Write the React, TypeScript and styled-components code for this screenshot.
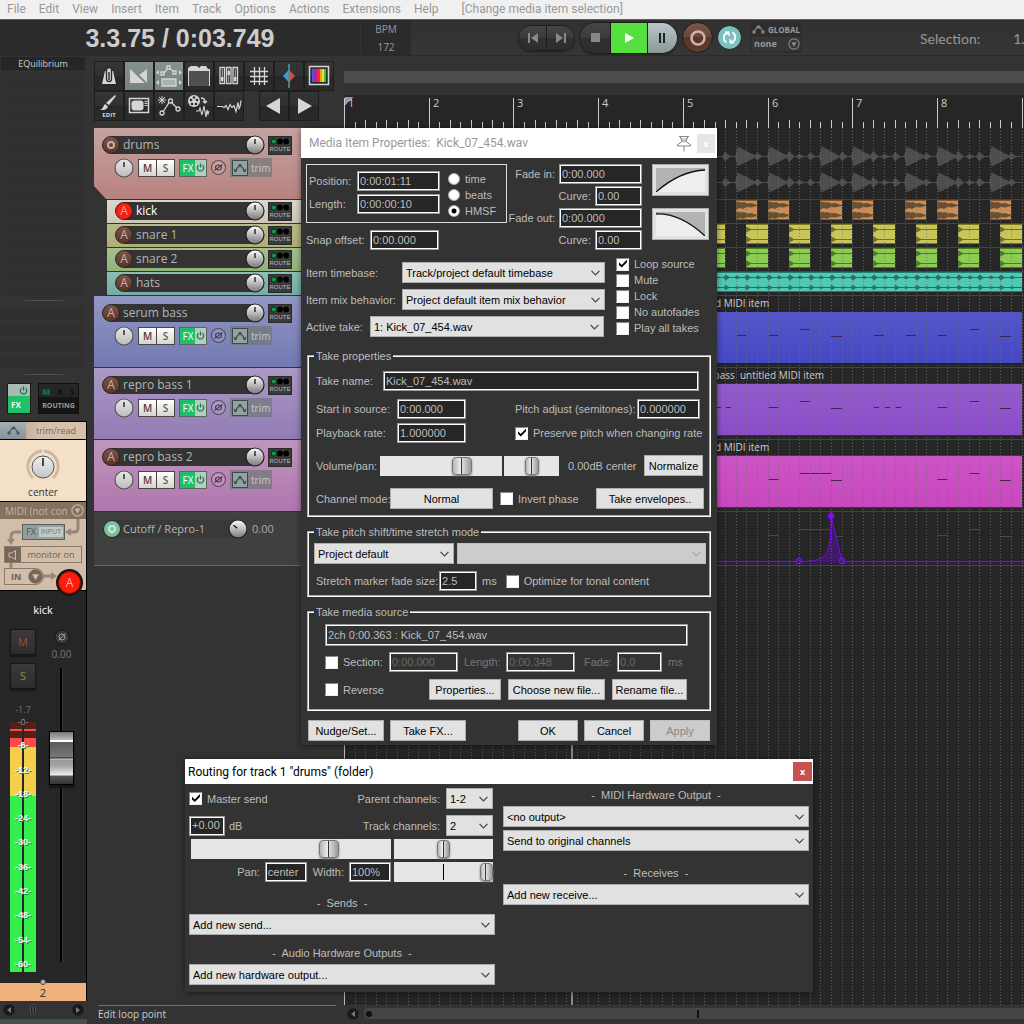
import React from 'react';
import styled, { createGlobalStyle, css } from 'styled-components';

const sans = '"Liberation Sans", Arial, sans-serif';
const human = '"Open Sans", "Noto Sans", sans-serif';

const GlobalStyle = createGlobalStyle`
  *, *::before, *::after { box-sizing: border-box; }
  html, body { margin: 0; padding: 0; background: #333; }
  body { overflow: hidden; font-family: ${human}; font-size: 11px; color: #bbb; }
  button, input, select { font: inherit; color: inherit; margin: 0; padding: 0; border: 0; border-radius: 0; outline: none; }
  svg { display: block; }
`;

const Page = styled.div`
  position: relative;
  display: flex;
  flex-direction: column;
  min-height: 100vh;
  background: #333;
`;

/* ---------- Menu ---------- */

const MenuBar = styled.nav`
  display: flex;
  align-items: center;
  gap: 13px;
  height: 20px;
  padding: 0 7px 2px;
  background: #f0f0f0;
  border-bottom: 1px solid #5a625e;
`;

const MenuLink = styled.a<{ $apart?: boolean }>`
  color: #999;
  font: 12px/16px Roboto, sans-serif;
  text-decoration: none;
  white-space: nowrap;
  margin-left: ${p => (p.$apart ? '10px' : '0')};
`;

/* ---------- Transport ---------- */

const Transport = styled.header`
  display: flex;
  align-items: center;
  height: 36px;
  background: linear-gradient(#303030, #363636);
  border-bottom: 1px solid #2a2a2a;
  overflow: hidden;
`;

const Clock = styled.div`
  flex: none;
  width: 361px;
  height: 36px;
  line-height: 36px;
  background: #2b2b2b;
  border-right: 1px solid #333;
  color: #ccc;
  font: bold 25px/36px ${sans};
  text-align: center;
`;

const Tempo = styled.div`
  flex: none;
  width: 50px;
  height: 36px;
  display: flex;
  flex-direction: column;
  align-items: center;
  background: #2b2b2b;
  color: #999;
  font-size: 10px;
  line-height: 18px;
`;

const Pill = styled.div<{ $big?: boolean; $gap: number }>`
  flex: none;
  display: flex;
  margin-left: ${p => p.$gap}px;
  height: ${p => (p.$big ? 32 : 26)}px;
  border: 1px solid #1c1c1c;
  border-radius: 16px;
  overflow: hidden;
  box-shadow: 0 2px 1px #2a2a2a;
`;

const PillButton = styled.button<{ $tone?: 'play' | 'pause'; $w: number }>`
  display: flex;
  align-items: center;
  justify-content: center;
  width: ${p => p.$w}px;
  height: 100%;
  background: linear-gradient(#454545, #3a3a3a 50%, #303030 50%, #2d2d2d);
  color: #888;
  & + & { border-left: 1px solid #1c1c1c; }
  ${p => p.$tone === 'play' && css`background: #55e040; color: #fff;`}
  ${p => p.$tone === 'pause' && css`background: linear-gradient(#bac6c8, #8b9898); color: #222;`}
`;

const RoundButton = styled.button<{ $size: number; $kind: 'rec' | 'loop'; $gap: number }>`
  flex: none;
  display: flex;
  align-items: center;
  justify-content: center;
  margin-left: ${p => p.$gap}px;
  width: ${p => p.$size}px;
  height: ${p => p.$size}px;
  border: 1px solid #1e1e1e;
  border-radius: 50%;
  background: ${p => (p.$kind === 'rec' ? 'linear-gradient(#7a5548, #6c4638 50%, #5c3426 50%, #613a2c)' : '#7cc0c0')};
`;

const GlobalBox = styled.div`
  flex: none;
  margin-left: 8px;
  width: 52px;
  height: 31px;
  padding: 1px 2px;
  background: #2e2e2e;
  color: #999;
  font: bold 8px/14px ${human};
  > div { display: flex; align-items: center; justify-content: space-between; }
  > div + div { background: #363636; padding-left: 2px; font-size: 9px; }
`;

const Selection = styled.div`
  flex: 1;
  display: flex;
  gap: 33px;
  padding-left: 118px;
  padding-top: 3px;
  color: #999;
  font: 14px/18px Lato, sans-serif;
  white-space: nowrap;
  overflow: hidden;
`;

/* ---------- Main ---------- */

const Main = styled.main`
  flex: 1;
  display: flex;
  min-height: 0;
`;

/* ---------- Mixer strip ---------- */

const Mixer = styled.aside`
  flex: none;
  display: flex;
  flex-direction: column;
  width: 87px;
  padding-top: 1px;
`;

const Slots = styled.div`
  display: flex;
  flex-direction: column;
  gap: 2px;
  padding: 0 2px 0 1px;
`;

const Slot = styled.div<{ $on?: boolean }>`
  height: 14px;
  background: ${p => (p.$on ? '#262626' : '#303030')};
  border-bottom: 1px solid #2d2d2d;
  color: #ccc;
  font: 9px/14px ${human};
  text-align: center;
`;

const Rule = styled.div<{ $my: number }>`
  width: 38px;
  height: 1px;
  margin: ${p => p.$my}px auto;
  background: #505050;
`;

const FxRow = styled.div`
  display: flex;
  gap: 7px;
  padding: 2px 7px 7px;
  height: 40px;
`;

const MixFx = styled.button`
  display: flex;
  flex-direction: column;
  width: 24px;
  height: 31px;
  border: 1px solid #1a1a1a;
  background: #20c068;
  color: #eafff0;
  font: bold 8px/17px ${human};
  text-align: left;
  > span:first-child { display: flex; justify-content: flex-end; align-items: center; height: 13px; width: 100%; padding-right: 2px; background: #a9b9b1; }
  > span:last-child { padding-left: 3px; }
`;

const MixRoute = styled.button`
  width: 41px;
  height: 31px;
  border: 1px solid #111;
  background: linear-gradient(#262626 13px, #151515 13px);
  color: #999;
  font: bold 7px/15px ${human};
  text-align: center;
  > div { display: flex; justify-content: space-around; height: 13px; line-height: 13px; color: #111; font-size: 8px; }
  b { color: #0a7a3a; }
`;

const Strip = styled.section`
  position: relative;
  border-top: 1px solid #000;
  border-right: 1px solid #000;
  background: #d2bda8;
  color: #77675a;
`;

const TrimRow = styled.div`
  display: flex;
  height: 18px;
  border-bottom: 1px solid #000;
  line-height: 17px;
  font-size: 9px;
  > span:first-child { width: 26px; background: linear-gradient(#a3afb3, #869399); display: flex; align-items: center; justify-content: center; }
  > span:last-child { flex: 1; text-align: center; background: linear-gradient(90deg, #c4b09c, #d4c0ab 25%); }
`;

const PanBox = styled.div`
  display: flex;
  flex-direction: column;
  align-items: center;
  height: 62px;
  padding-top: 7px;
  background: #f4dfc7;
  border-bottom: 1px solid #000;
  font: 10px/14px ${human};
  color: #333;
`;

const MidiBar = styled.button`
  display: flex;
  align-items: center;
  justify-content: space-between;
  width: 100%;
  height: 17px;
  padding: 0 2px 0 5px;
  background: #84725f;
  color: #c3b3a3;
  font: 10px/16px ${human};
`;

const IoBox = styled.div`
  position: relative;
  display: flex;
  flex-direction: column;
  align-items: flex-start;
  height: 71px;
  padding: 5px 4px 0;
  > svg { position: absolute; left: 0; top: 0; }
`;

const InputFx = styled.button`
  position: relative;
  display: flex;
  align-items: center;
  gap: 3px;
  width: 43px;
  height: 16px;
  margin-left: 18px;
  padding-left: 3px;
  border: 1px solid #55605f;
  background: #93a09f;
  color: #4e5a59;
  font: 9px/14px ${human};
  > span { width: 24px; background: #bfc9c6; color: #6a7674; font-size: 7px; line-height: 10px; text-align: center; }
`;

const MonitorBtn = styled.button`
  position: relative;
  display: flex;
  align-items: center;
  width: 78px;
  height: 17px;
  margin-top: 6px;
  border: 1px solid #8a7868;
  background: #d2bda8;
  color: #6f6052;
  font: 9px/15px ${human};
  > span:first-child { display: flex; align-items: center; justify-content: center; width: 16px; height: 15px; background: #77675a; }
  > span:last-child { flex: 1; text-align: center; }
`;

const InBtn = styled.button`
  position: relative;
  display: flex;
  align-items: center;
  justify-content: space-between;
  width: 40px;
  height: 17px;
  margin-top: 5px;
  padding-left: 6px;
  border: 1px solid #8a7868;
  border-radius: 0 9px 9px 0;
  background: #d2bda8;
  color: #6f6052;
  font: bold 9px/15px ${human};
`;

const ArmBig = styled.button`
  position: absolute;
  right: 5px;
  bottom: -4px;
  width: 23px;
  height: 23px;
  border: 1px solid #7a1008;
  border-radius: 50%;
  background: #ff1c0c;
  color: #ffb0a8;
  font: 12px/20px ${human};
  box-shadow: 0 0 0 2px #1c1414;
`;

const FaderZone = styled.section`
  flex: 1;
  display: flex;
  flex-direction: column;
  background: #262626;
  border-top: 1px solid #000;
  border-right: 1px solid #000;
`;

const StripName = styled.h2`
  margin: 10px 0 11px;
  height: 17px;
  font: 11px/17px ${human};
  text-align: center;
  color: #fff;
`;

const StripCols = styled.div`
  flex: 1;
  display: flex;
  padding-left: 10px;
  gap: 9px;
`;

const ColLeft = styled.div`
  display: flex;
  flex-direction: column;
  width: 26px;
`;

const ColRight = styled.div`
  display: flex;
  flex-direction: column;
  align-items: center;
  width: 33px;
`;

const SquareBtn = styled.button<{ $c: string }>`
  flex: none;
  width: 26px;
  height: 26px;
  margin-bottom: 8px;
  border: 1px solid #151515;
  background: linear-gradient(#3a3a3a, #2d2d2d);
  box-shadow: 0 2px 1px #1a1a1a;
  color: ${p => p.$c};
  font: 11px/24px ${human};
`;

const PeakText = styled.div`
  height: 12px;
  margin: 7px 0 6px;
  color: #777;
  font: 9px/12px ${human};
  text-align: center;
`;

const GainText = styled.div`
  height: 12px;
  margin: 3px 0 8px;
  color: #777;
  font: 10px/12px ${human};
`;

const Meter = styled.div`
  position: relative;
  display: flex;
  flex-direction: column;
  justify-content: space-between;
  height: 250px;
  padding-bottom: 2px;
  background: linear-gradient(
    #52211c 7px, #ff4a4a 7px, #ff4a4a 9px, #52211c 9px, #52211c 16px,
    #ff4a4a 16px, #ff4a4a 25px, #f5ce4b 25px, #f5ce4b 74px, #35f04c 74px);
  &::before { content: ''; position: absolute; left: 12px; top: 0; width: 2px; height: 100%; background: #262626; }
  > span { position: relative; height: 12px; font: bold 9px/12px ${sans}; color: #fff; text-align: center; text-shadow: 1px 1px 0 #1a8a50; }
  > span:first-child { height: 0; margin-bottom: 5px; line-height: 0; color: #888; text-shadow: none; font-weight: normal; }
`;

const FaderTrack = styled.div`
  position: relative;
  width: 3px;
  height: 294px;
  background: #000;
  border-right: 1px solid #3a3a3a;
`;

const FaderCap = styled.div`
  position: absolute;
  left: -11px;
  top: 63px;
  width: 25px;
  height: 54px;
  border: 1px solid #000;
  box-shadow: 0 3px 2px #151515;
  background: linear-gradient(#777, #bbb 8px, #fff 8px, #fff 10px, #5a5a5a 10px, #777 25px, #222 26px, #ddd 27px, #999 28px, #a5a5a5 34px, #eee 43px, #555 44px, #333);
`;

const IndexBar = styled.div`
  position: relative;
  height: 18px;
  background: #efb27c;
  color: #2a2a2a;
  font: 11px/19px ${human};
  text-align: center;
  &::before { content: ''; position: absolute; left: 40px; top: -4px; width: 6px; height: 6px; border-radius: 50%; background: #bbb; border: 1px solid #444; }
`;

const MixScroll = styled.div`
  display: flex;
  align-items: center;
  justify-content: space-between;
  height: 23px;
  padding: 0 3px 1px;
  background: #333;
  border-bottom: 5px solid #475050;
`;

/* ---------- Track panel ---------- */

const TrackPanel = styled.section`
  flex: none;
  display: flex;
  flex-direction: column;
  width: 257px;
  padding: 5px 7px 0;
`;

const Toolbar = styled.div`
  display: flex;
`;

const ToolButton = styled.button<{ $active?: boolean; $gap?: boolean }>`
  display: flex;
  align-items: center;
  justify-content: center;
  width: 30px;
  height: 30px;
  margin-left: ${p => (p.$gap ? '15px' : '0')};
  border: 1px solid #1e1e1e;
  background: ${p => (p.$active ? 'linear-gradient(#85938f, #75827f)' : 'linear-gradient(#353535, #303030 50%, #272727 50%, #2b2b2b)')};
  color: #d5d5d5;
`;

const TrackList = styled.div`
  display: flex;
  flex-direction: column;
  margin-top: 7px;
`;

const TrackRow = styled.div<{ $a: string; $b: string; $child?: boolean; $folder?: boolean }>`
  display: flex;
  flex-direction: column;
  gap: 4px;
  height: ${p => (p.$child ? 23 : 71)}px;
  margin: 0 0 1px ${p => (p.$child ? '13px' : '0')};
  padding: ${p => (p.$child ? '2px 0 0 8px' : '8px 0 0 8px')};
  background: linear-gradient(${p => p.$a}, ${p => p.$b});
  ${p => p.$folder && css`clip-path: polygon(0 0, 100% 0, 100% 100%, 12px 100%, 0 58px);`}
`;

const TrackHead = styled.div`
  display: flex;
  align-items: center;
  height: 18px;
`;

const Arm = styled.button<{ $c: string }>`
  position: relative;
  z-index: 1;
  flex: none;
  display: flex;
  align-items: center;
  justify-content: center;
  width: 18px;
  height: 18px;
  border: 1px solid #2a2220;
  border-radius: 50%;
  background: ${p => p.$c};
  color: #c9aea6;
  font: 12px/14px ${human};
`;

const NameBar = styled.div<{ $lit?: boolean; $child?: boolean }>`
  flex: none;
  display: flex;
  align-items: center;
  width: ${p => (p.$child ? 130 : 143)}px;
  height: 18px;
  margin-left: -8px;
  padding-left: 11px;
  background: #333;
  color: ${p => (p.$lit ? '#fff' : '#b5b5b5')};
  font: 12px/18px ${human};
  white-space: nowrap;
`;

const EnvName = styled.div`
  flex: none;
  width: 125px;
  height: 18px;
  margin-left: -8px;
  padding-left: 10px;
  background: #393939;
  color: #b5b5b5;
  font: 11px/18px ${human};
  white-space: nowrap;
`;

const KnobWrap = styled.span`
  position: relative;
  flex: none;
  margin-left: -10px;
`;

const RouteBtn = styled.button`
  flex: none;
  display: flex;
  flex-direction: column;
  align-items: center;
  justify-content: space-between;
  width: 24px;
  height: 19px;
  margin-left: 3px;
  padding: 1px 0;
  background: #3a3a3a;
  border: 1px solid #2a2a2a;
  color: #bbb;
  font: 6px/8px ${sans};
`;

const Controls = styled.div`
  display: flex;
  align-items: center;
  height: 19px;
  padding-left: 12px;
`;

const MsPair = styled.div`
  display: flex;
  height: 18px;
  margin-left: 4px;
  border: 1px solid #4a4444;
`;

const MsBtn = styled.button<{ $c: string }>`
  width: 17px;
  background: linear-gradient(#fff, #d5d5d5);
  color: ${p => p.$c};
  font: 600 10px/16px ${human};
  & + & { border-left: 1px solid #4a4444; width: 18px; }
`;

const FxPair = styled.button`
  display: flex;
  align-items: center;
  width: 28px;
  height: 18px;
  margin-left: 4px;
  border: 1px solid #5c6460;
  background: linear-gradient(90deg, #1fbf68 15px, #b5cdc0 15px);
  color: #fff;
  font: 10px/16px ${human};
  > span { width: 16px; text-align: center; }
`;

const PhaseBtn = styled.button`
  display: flex;
  align-items: center;
  justify-content: center;
  width: 15px;
  height: 15px;
  margin-left: 4px;
  border: 1px solid rgba(50, 40, 50, .7);
  border-radius: 50%;
  background: rgba(255, 255, 255, .12);
`;

const TrimBtn = styled.button`
  display: flex;
  align-items: center;
  gap: 3px;
  width: 42px;
  height: 19px;
  margin-left: 4px;
  padding-left: 2px;
  background: rgba(110, 120, 120, .7);
  color: #c9c9c9;
  font: 10px/18px ${human};
`;

const EnvRow = styled.div`
  height: 54px;
  padding: 8px 0 0 9px;
  background: #404040;
  border-bottom: 1px solid #666;
`;

const EnvValue = styled.span`
  margin-left: 4px;
  color: #aaa;
  font: 11px/18px ${human};
`;

const Status = styled.footer`
  margin: auto 1px 0 4px;
  height: 19px;
  border-top: 1px solid #707070;
  color: #ccc;
  font: 10px/16px ${human};
`;

/* ---------- Arrange ---------- */

const Arrange = styled.section`
  flex: 1;
  min-width: 0;
  display: flex;
  flex-direction: column;
  overflow: hidden;
`;

const Overview = styled.div`
  height: 12px;
  margin: 15px 0 12px;
  background: #4d4d4d;
`;

const Ruler = styled.div`
  position: relative;
  height: 33px;
  background: #262626;
  overflow: hidden;
  > svg { position: absolute; left: 0; top: 0; }
`;

const BarNumber = styled.span`
  position: absolute;
  top: 1px;
  color: #ccc;
  font: 11px/14px ${human};
`;

const Lanes = styled.div`
  position: relative;
  flex: 1;
  background: #262626;
  overflow: hidden;
  &::after { content: ''; position: absolute; left: 0; top: 0; bottom: 0; width: 1px; background: #bbb; }
`;

const Lane = styled.div<{ $h: number }>`
  position: relative;
  height: ${p => p.$h}px;
  border-bottom: 1px solid #444;
  > svg { position: absolute; left: 0; top: 0; }
`;

const Clip = styled.div<{ $c: string; $edge: string; $top?: number; $h: number }>`
  position: absolute;
  top: ${p => p.$top || 0}px;
  height: ${p => p.$h}px;
  background: ${p => p.$c};
  border-top: 1px solid ${p => p.$edge};
  border-bottom: 1px solid ${p => p.$edge};
  overflow: hidden;
  > svg { position: absolute; left: 0; top: 0; }
`;

const ClipName = styled.span`
  position: absolute;
  top: 0;
  color: #ccc;
  font: 10px/14px ${human};
  white-space: pre;
  z-index: 2;
`;

const GridOverlay = styled.svg`
  position: absolute;
  left: 0;
  top: 0;
  height: 100%;
  pointer-events: none;
`;

const EditCursor = styled.div`
  position: absolute;
  top: 0;
  bottom: 0;
  left: 227px;
  width: 2px;
  background: #888;
`;

const ArrangeScroll = styled.div`
  display: flex;
  align-items: center;
  gap: 5px;
  height: 19px;
  padding: 0 0 2px 3px;
`;

const ScrollTrack = styled.div`
  flex: 1;
  display: flex;
  align-items: center;
  height: 11px;
  padding-left: 2px;
  background: #454545;
  border-radius: 4px 0 0 4px;
  > i { width: 6px; height: 6px; border-radius: 50%; background: #111; }
  > b { width: 2px; height: 8px; margin-left: 325px; background: #111; }
`;

/* ---------- Dialogs ---------- */

const Window = styled.section<{ $x: number; $y: number; $w: number }>`
  position: absolute;
  left: ${p => p.$x}px;
  top: ${p => p.$y}px;
  width: ${p => p.$w}px;
  z-index: 10;
  background: #333;
  color: #bdbdbd;
  font: 11px/14px ${sans};
  box-shadow: 0 1px 6px rgba(0, 0, 0, .5);
`;

const TitleBar = styled.header<{ $dim?: boolean }>`
  display: flex;
  align-items: center;
  height: ${p => (p.$dim ? 30 : 25)}px;
  padding: ${p => (p.$dim ? '0 2px 0 8px' : '0 1px 0 3px')};
  background: #fff;
  > h2 { flex: 1; margin: 0; color: ${p => (p.$dim ? '#999' : '#000')}; font: 12px/16px Roboto, sans-serif; white-space: pre; }
`;

const CloseBtn = styled.button<{ $red?: boolean }>`
  width: ${p => (p.$red ? 19 : 18)}px;
  height: 19px;
  margin-left: 5px;
  background: ${p => (p.$red ? '#c75050' : '#e5e5e5')};
  color: #fff;
  font: bold 9px/17px ${human};
`;

const Body = styled.div`
  display: flex;
  flex-direction: column;
  padding: 6px 6px 4px 5px;
`;

const Row = styled.div<{ $mt?: number; $pl?: number; $pr?: number; $gap?: number; $end?: boolean }>`
  display: flex;
  align-items: center;
  justify-content: ${p => (p.$end ? 'flex-end' : 'flex-start')};
  margin-top: ${p => p.$mt || 0}px;
  padding-left: ${p => p.$pl || 0}px;
  padding-right: ${p => p.$pr || 0}px;
  gap: ${p => p.$gap || 0}px;
`;

const Stack = styled.div<{ $gap?: number; $w?: number; $pt?: number }>`
  display: flex;
  flex-direction: column;
  flex: none;
  gap: ${p => p.$gap || 0}px;
  width: ${p => (p.$w ? p.$w + 'px' : 'auto')};
  padding-top: ${p => p.$pt || 0}px;
`;

const Split = styled.div<{ $mt?: number }>`
  display: flex;
  align-items: flex-start;
  margin-top: ${p => p.$mt || 0}px;
`;

const TimeBox = styled.div`
  display: flex;
  gap: 8px;
  height: 59px;
  padding: 6px 2px 0;
  border: 1px solid #ddd;
`;

const Label = styled.label<{ $w?: number; $dim?: boolean }>`
  flex: none;
  width: ${p => (p.$w ? p.$w + 'px' : 'auto')};
  color: ${p => (p.$dim ? '#777' : 'inherit')};
  white-space: nowrap;
`;

const Field = styled.input<{ $w: number; $tall?: boolean }>`
  flex: none;
  width: ${p => p.$w}px;
  height: ${p => (p.$tall ? 22 : 20)}px;
  padding: 0 2px 1px;
  border: 1px solid #999;
  box-shadow: inset 0 0 0 1px #fff;
  background: ${p => (p.$tall ? '#333' : '#262626')};
  color: #bdbdbd;
  &:disabled { background: #333; color: #6a6a6a; }
`;

const Tick = styled.input.attrs({ type: 'checkbox' })`
  appearance: none;
  flex: none;
  position: relative;
  width: 13px;
  height: 13px;
  background: #fff;
  border: 1px solid #eee;
  border-top-color: #888;
  border-left-color: #888;
  &:checked::after {
    content: '';
    position: absolute;
    left: 2px;
    top: 1px;
    width: 8px;
    height: 8px;
    background: #000;
    clip-path: polygon(0 35%, 35% 68%, 100% 0, 100% 34%, 35% 100%, 0 68%);
  }
`;

const Dot = styled.input.attrs({ type: 'radio' })`
  appearance: none;
  flex: none;
  width: 12px;
  height: 12px;
  border: 1px solid #aaa;
  border-radius: 50%;
  background: #fff;
  &:checked { background: radial-gradient(circle, #000 2px, #fff 3px); }
`;

const CheckLine = styled.label<{ $push?: number }>`
  display: flex;
  align-items: center;
  gap: 5px;
  height: 16px;
  margin-left: ${p => p.$push || 0}px;
  white-space: nowrap;
`;

const PushButton = styled.button<{ $w: number; $auto?: boolean }>`
  flex: none;
  width: ${p => p.$w}px;
  height: 21px;
  margin-left: ${p => (p.$auto ? 'auto' : '0')};
  border: 1px solid #adadad;
  background: #e1e1e1;
  color: #000;
  &:disabled { background: #ccc; border-color: #bfbfbf; color: #888; }
`;

const FadeButton = styled.button`
  width: 57px;
  height: 32px;
  padding: 3px;
  border: 1px solid #adadad;
  background: #e1e1e1;
`;

const SelectFrame = styled.div<{ $w?: number }>`
  position: relative;
  flex: ${p => (p.$w ? 'none' : '1')};
  width: ${p => (p.$w ? p.$w + 'px' : 'auto')};
  height: 21px;
  > select {
    appearance: none;
    display: block;
    width: 100%;
    height: 21px;
    padding: 0 18px 0 3px;
    border: 1px solid #adadad;
    background: #e1e1e1;
    color: #000;
    &:disabled { background: #ccc; border-color: #bfbfbf; opacity: 1; }
  }
  > svg { position: absolute; right: 5px; top: 8px; pointer-events: none; }
`;

const Group = styled.fieldset<{ $mt: number; $h: number }>`
  min-width: 0;
  margin: ${p => p.$mt}px 0 0 1px;
  padding: 0 3px 0 5px;
  height: ${p => p.$h}px;
  border: 2px groove #fff;
  > legend { padding: 0 2px; line-height: 14px; }
`;

const thumb = css`
  appearance: none;
  height: 18px;
  border: 1px solid #777;
  border-radius: 4px;
  background: linear-gradient(90deg, #b5b5b5, #efefef calc(50% - 1px), #333 calc(50% - 1px), #333 50%, #dcdcdc 50%, #999);
  box-shadow: 0 1px 2px #777;
`;

const Slider = styled.input.attrs({ type: 'range' })<{ $w: number; $thumb: number; $mark?: boolean }>`
  appearance: none;
  flex: none;
  width: ${p => p.$w}px;
  height: 20px;
  background: ${p => (p.$mark ? 'linear-gradient(#000, #000) center / 1px 16px no-repeat #e6e6e6' : '#e6e6e6')};
  &::-webkit-slider-thumb { ${thumb} width: ${p => p.$thumb}px; }
`;

const RouteBody = styled.div`
  display: flex;
  gap: 8px;
  height: 208px;
  padding: 4px 4px 0;
`;

const Half = styled.div`
  flex: 1;
  min-width: 0;
  display: flex;
  flex-direction: column;
`;

const Heading = styled.h3<{ $mt: number; $mb: number }>`
  margin: ${p => p.$mt}px 0 ${p => p.$mb}px;
  font: 11px/14px ${sans};
  text-align: center;
  white-space: pre;
`;

const Spacer = styled.span`
  flex: 1;
`;

/* ---------- Icons ---------- */

const Power = ({ c = '#127a42' }: { c?: string }) => (
  <svg width="9" height="9" viewBox="0 0 9 9" fill="none" stroke={c} strokeWidth="1.2">
    <path d="M2.6 2.2a3.2 3.2 0 1 0 3.8 0M4.5 .6v3.8" />
  </svg>
);

const EnvIcon = ({ c = '#4f5b5b', w = 13 }: { c?: string; w?: number }) => (
  <svg width={w} height={w * 0.7} viewBox="0 0 13 9" stroke={c} fill={c}>
    <path d="M2 7L5 2h3l3 5" fill="none" strokeWidth="1.2" />
    <path d="M.5 5.5h3v3h-3zM5 .5h3v3H5zM9.5 5.5h3v3h-3z" stroke="none" />
  </svg>
);

const Drop = ({ c, solid, s = 13 }: { c: string; solid?: boolean; s?: number }) => (
  <svg width={s} height={s} viewBox="0 0 13 13">
    <circle cx="6.5" cy="6.5" r="5.6" fill={solid ? c : 'none'} stroke={c} strokeWidth="1.2" />
    <path d="M3.5 4.5h6L6.5 9.5z" fill={solid ? '#d2bda8' : c} />
  </svg>
);

const Phase = ({ c = '#4b3d4b' }: { c?: string }) => (
  <svg width="11" height="11" viewBox="0 0 11 11" fill="none" stroke={c} strokeWidth="1.1">
    <ellipse cx="5.5" cy="5.5" rx="3" ry="2.5" />
    <path d="M1.5 8.5L9.5 2.5" />
  </svg>
);

const Knob = ({ size = 20, flat, angle = 0 }: { size?: number; flat?: boolean; angle?: number }) => {
  const id = flat ? 'knobFlat' : 'knobMetal';
  return (
    <svg width={size} height={size} viewBox="0 0 20 20">
      <defs>
        <linearGradient id={id} x1="0" y1="0" x2="0" y2="1">
          <stop offset="0" stopColor={flat ? '#e6e6e6' : '#fff'} />
          <stop offset="1" stopColor={flat ? '#bdbdbd' : '#777'} />
        </linearGradient>
      </defs>
      <circle cx="10" cy="10" r="9" fill={`url(#${id})`} stroke={flat ? '#555' : '#222'} strokeWidth="1.2" />
      <path d="M10 4v5" stroke="#111" strokeWidth="1.3" transform={`rotate(${angle} 10 10)`} />
    </svg>
  );
};

const RouteDots = () => (
  <svg width="22" height="8" viewBox="0 0 22 8">
    <circle cx="4" cy="4" r="3" fill="#0a9a4a" stroke="#021" />
    <circle cx="11" cy="4" r="3.3" fill="#000" />
    <circle cx="18" cy="4" r="3.3" fill="#000" />
  </svg>
);

const Chevron = ({ c = '#444' }: { c?: string }) => (
  <svg width="9" height="6" viewBox="0 0 9 6" fill="none" stroke={c} strokeWidth="1.2">
    <path d="M.5 .8l4 4 4-4" />
  </svg>
);

const Pin = () => (
  <svg width="16" height="17" viewBox="0 0 16 17" fill="none" stroke="#888" strokeWidth="1">
    <path d="M3 1.5h10M4.5 2v1.5h1v3.5L1.5 9.5v1.5h13V9.5L10.5 7V3.5h1V2M7 3.5v4M9 3.5v4M8 11v5.5" />
  </svg>
);

const ArrowDot = ({ left }: { left?: boolean }) => (
  <svg width="12" height="12" viewBox="0 0 12 12">
    <circle cx="6" cy="6" r="5.7" fill="#191919" />
    <path d={left ? 'M8 3v6L4 6z' : 'M4 3v6l4-3z'} fill="#777" />
  </svg>
);

const T = ({ children }: { children: React.ReactNode }) => (
  <svg width="28" height="28" viewBox="0 0 28 28" fill="none" stroke="currentColor" strokeWidth="1.3">{children}</svg>
);

const MetronomeIcon = () => (
  <T>
    <path d="M10 9h8l3 13H7z" fill="currentColor" stroke="none" />
    <path d="M11.5 8a2.500 2.500 0 0 1 5 0v9a2.500 2.500 0 0 1-5 0z" stroke="#2a2a2a" fill="#d5d5d5" />
    <path d="M14 10v8" stroke="#333" strokeWidth="1.5" />
  </T>
);
const CrossfadeIcon = () => (
  <T><path d="M5 7v14h15zM22 7v14l-8-8z" fill="currentColor" stroke="none" /><path d="M12.5 12.5l9 9" stroke="#7b8885" strokeWidth="1.5" /></T>
);
const EnvMoveIcon = () => (
  <T>
    <path d="M9 11l4-5 4 2 2 3" />
    <path d="M6 10h3v3H6zM12 4h3v3h-3zM18 9h3v3h-3z" fill="#7c8986" />
    <path d="M4 8L1 10.5 4 13zM24 8l3 2.5L24 13zM4 18l-3 2.5L4 23zM24 18l3 2.5-3 2.5z" fill="currentColor" stroke="none" />
    <path d="M7 17h14v7H7z" fill="#aab3b0" />
  </T>
);
const GroupIcon = () => (
  <T><path d="M3.5 24V8h21v16z" fill="#505050" stroke="none" /><path d="M3 9V6l3-2h6l2 2 2-2h5l2 3h2v2z" fill="currentColor" stroke="none" /><path d="M3.5 9v15M24.5 9v15" strokeWidth="1" /></T>
);
const FadersIcon = () => (
  <T>
    {[5, 11.5, 18].map((x, i) => (
      <g key={x}>
        <path d={`M${x} 5.5h4.5v16h-4.5z`} />
        <path d={`M${x + 2.25} 7v13`} strokeWidth=".8" />
        <path d={`M${x + 1} ${i === 1 ? 9 : 15}h2.5v4h-2.5z`} fill="currentColor" stroke="none" />
      </g>
    ))}
  </T>
);
const GridIcon = () => (
  <T><path d="M9.5 5v18M14.5 5v18M19.5 5v18M5 9.5h18M5 14.5h18M5 19.5h18" /></T>
);
const SnapIcon = () => (
  <T>
    <path d="M13.5 8L8 14l5.5 6z" fill="#3a9bd5" stroke="none" />
    <path d="M14.5 8l5.5 6-5.5 6z" fill="#c5504a" stroke="none" />
    <path d="M14 2v24" stroke="#5fa9b0" />
  </T>
);
const SpectrumIcon = () => (
  <T>
    <path d="M4.5 4.5h19v18h-19z" strokeWidth="1.5" />
    {['#3b62e0', '#a020d0', '#e0208a', '#f03030', '#f0a020', '#e8e020', '#40c040'].map((c, i) => (
      <path key={c} d={`M${7 + i * 2} 7h2v13h-2z`} fill={c} stroke="none" />
    ))}
  </T>
);
const EditIcon = () => (
  <svg width="28" height="28" viewBox="0 0 28 28">
    <path d="M20 3l1 1-7 9-3-2zM10 12l3 2.5c-1 3-4 4-8 3.5 3-1 3-4 5-6z" fill="#d5d5d5" />
    <text x="14" y="25" fontSize="6" fontFamily='"Open Sans", sans-serif' fontWeight="bold" fill="#d5d5d5" textAnchor="middle">EDIT</text>
  </svg>
);
const ScreenIcon = () => (
  <T>
    <path d="M4.5 6.5h19v14h-19z" strokeWidth="1.5" />
    <rect x="6.5" y="8.5" width="12" height="10" rx="3" fill="currentColor" stroke="none" />
    <path d="M19.5 9.5h3M19.5 11.5h3M19.5 13.5h3" strokeWidth="1" />
  </T>
);
const StarEnvIcon = () => (
  <T>
    <path d="M7 4v8M3 8h8M4 5l6 6M10 5l-6 6" strokeWidth="1" />
    <path d="M8 20l7-11 8 8" />
    <circle cx="7" cy="21" r="2" fill="#2b2b2b" /><circle cx="15.5" cy="9" r="2" fill="#2b2b2b" /><circle cx="23" cy="17" r="2" fill="#2b2b2b" />
  </T>
);
const ReelIcon = () => (
  <T>
    <circle cx="9" cy="9" r="6" fill="currentColor" stroke="none" />
    {[[9, 5.5], [12, 8], [11, 12], [7, 12], [6, 8]].map(([x, y]) => <circle key={x + '-' + y} cx={x} cy={y} r="1.3" fill="#2b2b2b" stroke="none" />)}
    <path d="M16 6c3 0 4 2 4 4M18 9l2 2 2-2" />
    <path d="M11 19h3l1-3 2 7 2-9 2 11 1-7 1 4 1-3" strokeWidth="1.1" />
  </T>
);
const PulseIcon = () => (
  <T><path d="M2 14.5h5l2 1 2-2 2 4 2-5 2 3 2-2 2 6 2-9 1 6 1-2 1-6" strokeWidth="1.2" /></T>
);
const TriLeft = () => <T><path d="M20 6v16L6 14z" fill="currentColor" stroke="none" /></T>;
const TriRight = () => <T><path d="M8 6v16l14-8z" fill="currentColor" stroke="none" /></T>;

/* ---------- Data ---------- */

const menus = ['File', 'Edit', 'View', 'Insert', 'Item', 'Track', 'Options', 'Actions', 'Extensions', 'Help'];

const tools = [
  { label: 'Metronome', icon: <MetronomeIcon /> },
  { label: 'Auto-crossfade', icon: <CrossfadeIcon />, active: true },
  { label: 'Move envelopes with items', icon: <EnvMoveIcon />, active: true },
  { label: 'Item grouping', icon: <GroupIcon /> },
  { label: 'Ripple editing', icon: <FadersIcon /> },
  { label: 'Grid lines', icon: <GridIcon /> },
  { label: 'Snap', icon: <SnapIcon /> },
  { label: 'Colours', icon: <SpectrumIcon /> },
];

const tools2 = [
  { label: 'Edit', icon: <EditIcon /> },
  { label: 'Screen', icon: <ScreenIcon /> },
  { label: 'New envelope', icon: <StarEnvIcon /> },
  { label: 'Render', icon: <ReelIcon /> },
  { label: 'Waveform', icon: <PulseIcon /> },
  { label: 'Previous', icon: <TriLeft />, gap: true },
  { label: 'Next', icon: <TriRight /> },
];

type Track = { name: string; a: string; b: string; child?: boolean; folder?: boolean; lit?: boolean };
const tracks: Track[] = [
  { name: 'drums', a: '#c4a3a0', b: '#b88280', folder: true },
  { name: 'kick', a: '#dbd7cf', b: '#cfc6ba', child: true, lit: true },
  { name: 'snare 1', a: '#b9ba8c', b: '#aeae75', child: true },
  { name: 'snare 2', a: '#a5bf93', b: '#91b378', child: true },
  { name: 'hats', a: '#8bbeb5', b: '#73ada3', child: true },
  { name: 'serum bass', a: '#9297c5', b: '#7378b2' },
  { name: 'repro bass 1', a: '#ab99c6', b: '#927cb5' },
  { name: 'repro bass 2', a: '#c096bd', b: '#af76ae' },
];

const STEP = 10.5875;
const at = (n: number) => Math.round(n * STEP);
const steps = Array.from({ length: 200 }, (_, i) => i);

const kicks = [37, 40, 45, 48, 53, 56, 61];
const snares = [34, 38, 42, 46, 50, 54, 58, 62];
const smallHits: [number, number][] = [[36, 5], [39, 4], [42, 6], [43, 3], [44, 4], [47, 5], [50, 6], [51, 3], [52, 5], [55, 4], [58, 6], [59, 3], [60, 5], [63, 4]];

type Note = [number, number, number];
const serum: Note[] = [[37, 1, 24], [40, 1, 24], [43, 1, 18], [46, 1, 25], [50, 1, 24], [53, 1, 24], [56, 1, 24], [59, 1, 18], [62, 1, 25]];
const repro1: Note[] = [[35, .6, 24], [36, .6, 24], [40, 1, 24], [43, 1, 18], [46, 1, 25], [50, .6, 24], [51, .6, 24], [52, .6, 24], [56, 1, 24], [59, 1, 18], [62, 1, 25]];
const repro2: Note[] = [[40, 1, 24], [43, 3, 18], [46, 1, 25], [56, 1, 24], [59, 1, 18], [62, 1, 25]];

const burst = (x: number, cy: number, amp: number, len: number) => {
  const top: string[] = [];
  const bottom: string[] = [];
  for (let i = 0; i <= len; i++) {
    const jag = i % 2 ? 0.82 : 1;
    const a = amp * (1 - i / len) * jag;
    top.push(`${x + i} ${(cy - a).toFixed(1)}`);
    bottom.unshift(`${x + i} ${(cy + a).toFixed(1)}`);
  }
  return `M${x - 3} ${cy}L${top.join('L')}L${bottom.join('L')}Z`;
};

const Notes = ({ notes, from, color }: { notes: Note[]; from: number; color: string }) => (
  <svg width="1000" height="52" shapeRendering="crispEdges">
    {notes.map(([n, len, y]) => (
      <rect key={n} x={at(n) - from} y={y - 1} width={Math.round(len * STEP)} height="1" fill={color} />
    ))}
  </svg>
);

const MidiLane = ({ label, colors, edge, notes }: { label: string; colors: string; edge: string; notes: Note[] }) => {
  const left = at(32);
  return (
    <Lane $h={72}>
      <ClipName style={{ left: left + 2 }}>{label}</ClipName>
      <Clip $c={colors} $edge={edge} $top={15} $h={53} style={{ left, width: at(64) - left }}>
        <Notes notes={notes} from={left} color="rgba(50,30,60,.85)" />
      </Clip>
    </Lane>
  );
};

const HitLane = ({ hits, color, edge, wave, big }: { hits: number[]; color: string; edge: string; wave: string; big?: boolean }) => (
  <Lane $h={24}>
    {hits.map(n => (
      <Clip key={n} $c={color} $edge={edge} $h={20} style={{ left: at(n), width: at(n + 2) - at(n) }}>
        <svg width="22" height="18">
          {[4.5, 14.5].map(cy => (
            <g key={cy} fill={wave}>
              {big
                ? <path d={`M0 ${cy - 4}L6 ${cy - 3}L8 ${cy - 3.5}L11 ${cy - 2}L15 ${cy - 2.5}L21 ${cy - 0.5}V${cy + 0.5}L15 ${cy + 2}L11 ${cy + 1.5}L7 ${cy + 3.5}L4 ${cy + 2.5}L0 ${cy + 4}Z`} />
                : <path d={burst(1, cy, 3, 5)} />}
              <rect x="0" y={cy - 0.5} width="22" height="1" />
            </g>
          ))}
        </svg>
      </Clip>
    ))}
  </Lane>
);

const Select = ({ label, value, w, disabled }: { label: string; value: string; w?: number; disabled?: boolean }) => (
  <SelectFrame $w={w}>
    <select aria-label={label} disabled={disabled} defaultValue={value}><option>{value}</option></select>
    <Chevron c={disabled ? '#aaa' : '#444'} />
  </SelectFrame>
);

const LabeledField = ({ id, label, w, labelW, value, disabled }: { id: string; label: string; w: number; labelW?: number; value: string; disabled?: boolean }) => (
  <>
    <Label htmlFor={id} $w={labelW} $dim={disabled}>{label}</Label>
    <Field id={id} $w={w} defaultValue={value} disabled={disabled} />
  </>
);

const Check = ({ label, checked, push }: { label: string; checked?: boolean; push?: number }) => (
  <CheckLine $push={push}><Tick defaultChecked={checked} />{label}</CheckLine>
);

const TrackHeader = ({ t }: { t: Track }) => (
  <TrackRow $a={t.a} $b={t.b} $child={t.child} $folder={t.folder}>
    <TrackHead>
      <Arm $c={t.lit ? '#ff1c0c' : 'linear-gradient(#7a5548, #5c3426)'} aria-label={`Arm ${t.name}`}>
        {t.folder
          ? <svg width="10" height="10"><circle cx="5" cy="5" r="3" fill="none" stroke="#c9aea6" strokeWidth="2" /></svg>
          : 'A'}
      </Arm>
      <NameBar $lit={t.lit} $child={t.child}>{t.name}</NameBar>
      <KnobWrap><Knob /></KnobWrap>
      <RouteBtn><RouteDots />ROUTE</RouteBtn>
    </TrackHead>
    {!t.child && (
      <Controls>
        <Knob flat />
        <MsPair><MsBtn $c="#5a3a30">M</MsBtn><MsBtn $c="#5a6038">S</MsBtn></MsPair>
        <FxPair><span>FX</span><Power /></FxPair>
        <PhaseBtn aria-label="Phase"><Phase /></PhaseBtn>
        <TrimBtn>
          <svg width="16" height="16"><path d="M.5 .5h15v15H.5z" fill="#93a3a1" stroke="#3c4646" /><path d="M3 11L7 6h2l4 5" fill="none" stroke="#4a5656" strokeWidth="1.3" /><path d="M2 9h3v3H2zM6.5 4h3v3h-3zM11 9h3v3h-3z" fill="#4a5656" /></svg>
          trim
        </TrimBtn>
      </Controls>
    )}
  </TrackRow>
);

const MixerStrip = () => (
  <Mixer>
    <Slots>
      <Slot $on>EQuilibrium</Slot>
      {Array.from({ length: 14 }, (_, i) => <Slot key={i} />)}
    </Slots>
    <Rule $my={5} />
    <Slots>{Array.from({ length: 4 }, (_, i) => <Slot key={i} />)}</Slots>
    <Rule $my={6} />
    <FxRow>
      <MixFx><span><Power /></span><span>FX</span></MixFx>
      <MixRoute><div><b>M</b><span>R</span><span>S</span></div>ROUTING</MixRoute>
    </FxRow>
    <Strip>
      <TrimRow><span><EnvIcon /></span><span>trim/read</span></TrimRow>
      <PanBox>
        <svg width="36" height="38" viewBox="0 0 36 38">
          <defs>
            <linearGradient id="panKnob" x1="0" y1="0" x2="0" y2="1"><stop offset="0" stopColor="#f0f0f0" /><stop offset="1" stopColor="#c5c5c5" /></linearGradient>
          </defs>
          <path d="M8 31A15.5 15.5 0 0 1 17 4M19 4A15.5 15.5 0 0 1 28 31" fill="none" stroke="#cdb9a3" strokeWidth="3" />
          <circle cx="18" cy="20" r="11" fill="url(#panKnob)" stroke="#555" />
          <path d="M18 11v8" stroke="#111" strokeWidth="1.5" />
        </svg>
        center
      </PanBox>
      <MidiBar><span>MIDI (not con</span><Drop c="#c3b3a3" /></MidiBar>
      <IoBox>
        <svg width="86" height="71" fill="none" stroke="#98867a" strokeWidth="3">
          <path d="M78 0v9q0 4-4 4h-4M21 13h-6q-4 0-4 5v2M11 43v6" />
          <path d="M71 9v8l-6-4zM7 20h8l-4 6zM51 53v8l6-4z" fill="#98867a" stroke="none" />
          <path d="M43 57h9" />
        </svg>
        <InputFx>FX<span>INPUT</span></InputFx>
        <MonitorBtn>
          <span><svg width="10" height="10" fill="none" stroke="#d2bda8"><path d="M1 3h2.5l4-2.5v9L3.5 7H1z" /></svg></span>
          <span>monitor on</span>
        </MonitorBtn>
        <InBtn>IN<Drop c="#77675a" solid s={15} /></InBtn>
        <ArmBig>A</ArmBig>
      </IoBox>
    </Strip>
    <FaderZone>
      <StripName>kick</StripName>
      <StripCols>
        <ColLeft>
          <SquareBtn $c="#9a5040">M</SquareBtn>
          <SquareBtn $c="#8a9045">S</SquareBtn>
          <PeakText>-1.7</PeakText>
          <Meter>
            {['-0-', '-6-', '-12-', '-18-', '-24-', '-30-', '-36-', '-42-', '-48-', '-54-', '-60-'].map(v => <span key={v}>{v}</span>)}
          </Meter>
        </ColLeft>
        <ColRight>
          <svg width="16" height="16"><circle cx="8" cy="8" r="7" fill="#3a3a3a" stroke="#151515" /><circle cx="8" cy="8" r="3" fill="none" stroke="#999" /><path d="M4.5 11.5l7-7" stroke="#999" /></svg>
          <GainText>0.00</GainText>
          <FaderTrack><FaderCap /></FaderTrack>
        </ColRight>
      </StripCols>
      <IndexBar>2</IndexBar>
    </FaderZone>
    <MixScroll>
      <ArrowDot left />
      <svg width="6" height="11"><rect x=".5" y=".5" width="5" height="10" rx="2" fill="#222" stroke="#555" /><path d="M3 2v7" stroke="#666" /></svg>
      <Spacer style={{ flex: '0 0 6px' }} />
      <ArrowDot />
    </MixScroll>
  </Mixer>
);

const ArrangeView = () => (
  <Arrange>
    <Overview />
    <Ruler>
      <svg width="2120" height="33" shapeRendering="crispEdges">
        {steps.map(i => {
          const y = i % 8 === 0 ? 3 : i % 2 === 0 ? 25 : 27;
          return <rect key={i} x={at(i)} y={y} width="1" height={33 - y} fill="#ccc" />;
        })}
        <path d="M1 2h8l-8 8z" fill="#999" />
      </svg>
      {Array.from({ length: 8 }, (_, i) => <BarNumber key={i} style={{ left: at(i * 8) + 4 }}>{i + 1}</BarNumber>)}
    </Ruler>
    <Lanes>
      <Lane $h={72}>
        <svg width={at(64)} height="71">
          {[28, 54].map(cy => (
            <g key={cy} fill="#4e4e4e">
              <rect x="0" y={cy} width={at(64)} height="1" />
              {kicks.map(n => <path key={n} d={burst(at(n) + 2, cy + 0.5, 11, 19)} />)}
              {smallHits.map(([n, a]) => <path key={n} d={burst(at(n), cy + 0.5, a, 6)} />)}
            </g>
          ))}
        </svg>
      </Lane>
      <HitLane hits={kicks} color="#c98f58" edge="#8a5522" wave="#6b4f33" big />
      <HitLane hits={snares} color="#c8c65a" edge="#7c7a20" wave="#6f6e30" />
      <HitLane hits={snares} color="#8ccc55" edge="#4a8020" wave="#4c7a2c" />
      <Lane $h={24}>
        <Clip $c="#50c9b4" $edge="#1f7f70" $h={20} style={{ left: 0, width: at(64) }}>
          <svg width={at(64)} height="18">
            {[4.5, 14.5].map(cy => (
              <g key={cy} fill="#2b6f64">
                <rect x="0" y={cy - 0.5} width={at(64)} height="1" />
                {steps.slice(0, 64).map(n => <path key={n} d={burst(at(n) + 1, cy, (n % 2 ? 2 : 3.2) - (cy > 9 ? 0.6 : 0), 4)} />)}
              </g>
            ))}
          </svg>
        </Clip>
      </Lane>
      <MidiLane label="untitled MIDI item" colors="linear-gradient(#5456c8, #4548c4)" edge="#16186e" notes={serum} />
      <MidiLane label="repro bass  untitled MIDI item" colors="linear-gradient(#935ccc, #8c4cc8)" edge="#451a78" notes={repro1} />
      <MidiLane label="untitled MIDI item" colors="linear-gradient(#cc55c4, #c947c0)" edge="#6e1a68" notes={repro2} />
      <Lane $h={54}>
        <Notes notes={repro2} from={0} color="#484848" />
        <svg width="2120" height="54" fill="none" stroke="#7a08f0">
          <path d={`M${at(43)} 50C${at(46) - 3} 50 ${at(46)} 44 ${at(46)} 4L${at(47)} 50Z`} fill="#3f1a68" stroke="none" />
          <path d="M0 50.5H2120" stroke="#3b1466" />
          <path d={`M0 49.5H${at(43)}C${at(46) - 3} 50 ${at(46)} 44 ${at(46)} 4L${at(47)} 49.5H2120`} />
          <circle cx={at(43)} cy="49" r="2.5" fill="#262626" strokeWidth="1.5" />
          <circle cx={at(47)} cy="49" r="2.5" fill="#262626" strokeWidth="1.5" />
          <circle cx={at(46)} cy="4" r="3" fill="#7a08f0" />
        </svg>
      </Lane>
      <GridOverlay width="2120" shapeRendering="crispEdges">
        {steps.slice(1).map(i => <line key={i} x1={at(i) + 0.5} x2={at(i) + 0.5} y1="0" y2="2000" stroke="#6a6e6a" strokeOpacity=".8" strokeDasharray="1 2" />)}
      </GridOverlay>
      <EditCursor />
    </Lanes>
    <ArrangeScroll>
      <ArrowDot left />
      <ScrollTrack><i /><b /></ScrollTrack>
    </ArrangeScroll>
  </Arrange>
);

const MediaDialog = () => (
  <Window $x={301} $y={128} $w={416} aria-label="Media Item Properties">
    <TitleBar $dim>
      <h2>{'Media Item Properties:  Kick_07_454.wav'}</h2>
      <Pin />
      <CloseBtn aria-label="Close">x</CloseBtn>
    </TitleBar>
    <Body>
      <Split>
        <Stack $w={201}>
          <TimeBox>
            <Stack $gap={3}>
              <Row><LabeledField id="pos" label="Position:" labelW={48} w={83} value="0:00:01:11" /></Row>
              <Row><LabeledField id="len" label="Length:" labelW={48} w={83} value="0:00:00:10" /></Row>
            </Stack>
            <Stack>
              {['time', 'beats', 'HMSF'].map(u => (
                <CheckLine key={u}><Dot name="unit" defaultChecked={u === 'HMSF'} />{u}</CheckLine>
              ))}
            </Stack>
          </TimeBox>
          <Row $mt={7}><LabeledField id="snap" label="Snap offset:" labelW={64} w={69} value="0:00.000" /></Row>
        </Stack>
        <Stack $w={135} $gap={2}>
          <Row $end $gap={4}><LabeledField id="fin" label="Fade in:" w={83} value="0:00.000" /></Row>
          <Row $end $gap={4}><LabeledField id="c1" label="Curve:" w={47} value="0.00" /></Row>
          <Row $end $gap={4}><LabeledField id="fout" label="Fade out:" w={83} value="0:00.000" /></Row>
          <Row $end $gap={4}><LabeledField id="c2" label="Curve:" w={47} value="0.00" /></Row>
        </Stack>
        <Stack $gap={12}>
          <Row $pl={10}>
            <FadeButton aria-label="Fade in shape">
              <svg width="49" height="24"><path d="M0 0h49v24H0z" fill="#efefef" /><path d="M0 0v24Q24 3 49 2V0z" fill="#b3b3b3" /><path d="M0 24Q24 3 49 2" fill="none" stroke="#111" strokeWidth="1.3" /></svg>
            </FadeButton>
          </Row>
          <Row $pl={10}>
            <FadeButton aria-label="Fade out shape">
              <svg width="49" height="24"><path d="M0 0h49v24H0z" fill="#efefef" /><path d="M0 0v2Q24 1 49 24V0z" fill="#b3b3b3" /><path d="M0 2Q24 1 49 24" fill="none" stroke="#111" strokeWidth="1.3" /></svg>
            </FadeButton>
          </Row>
        </Stack>
      </Split>
      <Split $mt={6}>
        <Stack $w={310} $gap={6} $pt={6}>
          <Row><Label $w={96}>Item timebase:</Label><Select label="Item timebase" w={203} value="Track/project default timebase" /></Row>
          <Row><Label $w={96}>Item mix behavior:</Label><Select label="Item mix behavior" w={203} value="Project default item mix behavior" /></Row>
          <Row><Label $w={64}>Active take:</Label><Select label="Active take" w={234} value="1: Kick_07_454.wav" /></Row>
        </Stack>
        <Stack>
          <Check label="Loop source" checked />
          <Check label="Mute" />
          <Check label="Lock" />
          <Check label="No autofades" />
          <Check label="Play all takes" />
        </Stack>
      </Split>
      <Group $mt={12} $h={168}>
        <legend>Take properties</legend>
        <Row $mt={8} $pl={2}><LabeledField id="take" label="Take name:" labelW={67} w={316} value="Kick_07_454.wav" /></Row>
        <Row $mt={8} $pl={2} $pr={6}>
          <LabeledField id="start" label="Start in source:" labelW={81} w={69} value="0:00.000" />
          <Spacer />
          <LabeledField id="pitch" label="Pitch adjust (semitones):" labelW={122} w={63} value="0.000000" />
        </Row>
        <Row $mt={4} $pl={2}>
          <LabeledField id="rate" label="Playback rate:" labelW={81} w={69} value="1.000000" />
          <Check label="Preserve pitch when changing rate" checked push={49} />
        </Row>
        <Row $mt={12} $pl={2} $pr={3} $gap={2}>
          <Label $w={62}>Volume/pan:</Label>
          <Slider $w={122} $thumb={20} defaultValue={71} aria-label="Volume" />
          <Slider $w={55} $thumb={14} defaultValue={50} aria-label="Pan" />
          <Row $pl={7} $gap={3}><span>0.00dB</span><span>center</span></Row>
          <PushButton $w={59} $auto>Normalize</PushButton>
        </Row>
        <Row $mt={12} $pl={2} $pr={2}>
          <Label $w={74}>Channel mode:</Label>
          <PushButton $w={103}>Normal</PushButton>
          <Check label="Invert phase" push={7} />
          <PushButton $w={108} $auto>Take envelopes..</PushButton>
        </Row>
      </Group>
      <Group $mt={8} $h={72}>
        <legend>Take pitch shift/time stretch mode</legend>
        <Row $mt={4} $gap={3}>
          <Select label="Pitch shift mode" w={140} value="Project default" />
          <Select label="Pitch shift parameter" value="" disabled />
        </Row>
        <Row $mt={7} $pl={2}>
          <LabeledField id="smf" label="Stretch marker fade size:" labelW={123} w={38} value="2.5" />
          <Row $pl={5}>ms</Row>
          <Check label="Optimize for tonal content" push={9} />
        </Row>
      </Group>
      <Group $mt={8} $h={106}>
        <legend>Take media source</legend>
        <Row $mt={5} $pl={11}><Field aria-label="Media source" $w={363} $tall readOnly value="2ch 0:00.363 : Kick_07_454.wav" /></Row>
        <Row $mt={6} $pl={11}>
          <Row $gap={6}>
            <Label $w={58} as="div"><Check label="Section:" /></Label>
            <Field aria-label="Section start" $w={69} disabled defaultValue="0:00.000" />
            <LabeledField id="slen" label="Length:" labelW={36} w={69} value="0:00.348" disabled />
            <Row $pl={3}><LabeledField id="sfade" label="Fade:" labelW={33} w={45} value="0.0" disabled /></Row>
            <Label $dim as="span">ms</Label>
          </Row>
        </Row>
        <Row $mt={7} $pl={11} $pr={19} $gap={7}>
          <Check label="Reverse" />
          <PushButton $w={72} $auto>Properties...</PushButton>
          <PushButton $w={97}>Choose new file...</PushButton>
          <PushButton $w={75}>Rename file...</PushButton>
        </Row>
      </Group>
      <Row $mt={9} $pl={2} $pr={1} $gap={6}>
        <PushButton $w={76}>Nudge/Set...</PushButton>
        <PushButton $w={76}>Take FX...</PushButton>
        <Spacer />
        <PushButton $w={60}>OK</PushButton>
        <PushButton $w={60}>Cancel</PushButton>
        <PushButton $w={60} disabled>Apply</PushButton>
      </Row>
    </Body>
  </Window>
);

const RoutingDialog = () => (
  <Window $x={185} $y={759} $w={628} aria-label="Routing">
    <TitleBar>
      <h2>Routing for track 1 "drums" (folder)</h2>
      <CloseBtn $red aria-label="Close">x</CloseBtn>
    </TitleBar>
    <RouteBody>
      <Half>
        <Row $pr={2} $gap={6}>
          <Check label="Master send" checked />
          <Spacer />
          <span>Parent channels:</span>
          <Select label="Parent channels" w={47} value="1-2" />
        </Row>
        <Row $mt={6} $pr={2} $gap={4}>
          <Field aria-label="Send volume in dB" $w={36} defaultValue="+0.00" />
          <span>dB</span>
          <Spacer />
          <Row $gap={6}><span>Track channels:</span><Select label="Track channels" w={47} value="2" /></Row>
        </Row>
        <Row $mt={3} $pl={2} $gap={3}>
          <Slider $w={200} $thumb={20} defaultValue={71} aria-label="Send volume" />
          <Slider $w={99} $thumb={13} defaultValue={50} aria-label="Send pan" />
        </Row>
        <Row $mt={3} $pr={2} $gap={3} $end>
          <Row $gap={5}><LabeledField id="rpan" label="Pan:" w={42} value="center" /></Row>
          <Row $gap={5} $pl={3}><LabeledField id="rwid" label="Width:" w={42} value="100%" /></Row>
          <Slider $w={99} $thumb={13} $mark defaultValue={100} aria-label="Width" />
        </Row>
        <Heading $mt={14} $mb={4}>{'-  Sends  -'}</Heading>
        <Row><Select label="Sends" value="Add new send..." /></Row>
        <Heading $mt={11} $mb={4}>{'-  Audio Hardware Outputs  -'}</Heading>
        <Row><Select label="Audio hardware outputs" value="Add new hardware output..." /></Row>
      </Half>
      <Half>
        <Heading $mt={0} $mb={4}>{'-  MIDI Hardware Output  -'}</Heading>
        <Row><Select label="MIDI hardware output" value="<no output>" /></Row>
        <Row $mt={3}><Select label="MIDI channels" value="Send to original channels" /></Row>
        <Heading $mt={15} $mb={4}>{'-  Receives  -'}</Heading>
        <Row><Select label="Receives" value="Add new receive..." /></Row>
      </Half>
    </RouteBody>
  </Window>
);

export default function App() {
  return (
    <>
      <GlobalStyle />
      <Page>
        <MenuBar>
          {menus.map(m => <MenuLink key={m} href="#">{m}</MenuLink>)}
          <MenuLink href="#" $apart>[Change media item selection]</MenuLink>
        </MenuBar>
        <Transport>
          <Clock>3.3.75 / 0:03.749</Clock>
          <Tempo><span>BPM</span><span>172</span></Tempo>
          <Pill $gap={107}>
            <PillButton $w={27} aria-label="Go to start"><svg width="10" height="10" fill="currentColor"><path d="M0 0h2v10H0zM10 0v10L3 5z" /></svg></PillButton>
            <PillButton $w={28} aria-label="Go to end"><svg width="10" height="10" fill="currentColor"><path d="M8 0h2v10H8zM0 0v10l7-5z" /></svg></PillButton>
          </Pill>
          <Pill $big $gap={4}>
            <PillButton $w={30} aria-label="Stop"><svg width="9" height="9" fill="currentColor"><path d="M0 0h9v9H0z" /></svg></PillButton>
            <PillButton $w={37} $tone="play" aria-label="Play"><svg width="9" height="10" fill="currentColor"><path d="M0 0v10l9-5z" /></svg></PillButton>
            <PillButton $w={30} $tone="pause" aria-label="Pause"><svg width="7" height="10" fill="currentColor"><path d="M0 0h2v10H0zM4 0h2v10H4z" /></svg></PillButton>
          </Pill>
          <RoundButton $size={31} $kind="rec" $gap={4} aria-label="Record"><svg width="16" height="16"><circle cx="8" cy="8" r="6.5" fill="none" stroke="#cbb3aa" strokeWidth="2.6" /></svg></RoundButton>
          <RoundButton $size={25} $kind="loop" $gap={4} aria-label="Repeat">
            <svg width="15" height="15" fill="none" stroke="#fff" strokeWidth="1.8"><path d="M4.5 12.5A5.5 5.5 0 0 1 4.5 3M10.5 2.5A5.5 5.5 0 0 1 10.5 12" /><path d="M2.5 1.5h5v5zM12.5 13.5h-5v-5z" fill="#fff" stroke="none" /></svg>
          </RoundButton>
          <GlobalBox>
            <div><EnvIcon c="#888" w={13} /><span>GLOBAL</span></div>
            <div><span>none</span><Drop c="#888" s={12} /></div>
          </GlobalBox>
          <Selection><span>Selection:</span><span>1.1.00</span></Selection>
        </Transport>
        <Main>
          <MixerStrip />
          <TrackPanel>
            <Toolbar>{tools.map(t => <ToolButton key={t.label} $active={t.active} aria-label={t.label}>{t.icon}</ToolButton>)}</Toolbar>
            <Toolbar>{tools2.map(t => <ToolButton key={t.label} $gap={t.gap} aria-label={t.label}>{t.icon}</ToolButton>)}</Toolbar>
            <TrackList>
              {tracks.map(t => <TrackHeader key={t.name} t={t} />)}
              <EnvRow>
                <TrackHead>
                  <Arm $c="#7fbf9f" aria-label="Arm envelope"><svg width="10" height="10"><circle cx="5" cy="5" r="3" fill="none" stroke="#c5ead6" strokeWidth="2" /></svg></Arm>
                  <EnvName>Cutoff / Repro-1</EnvName>
                  <KnobWrap><Knob angle={-50} /></KnobWrap>
                  <EnvValue>0.00</EnvValue>
                </TrackHead>
              </EnvRow>
            </TrackList>
            <Status>Edit loop point</Status>
          </TrackPanel>
          <ArrangeView />
        </Main>
        <MediaDialog />
        <RoutingDialog />
      </Page>
    </>
  );
}
